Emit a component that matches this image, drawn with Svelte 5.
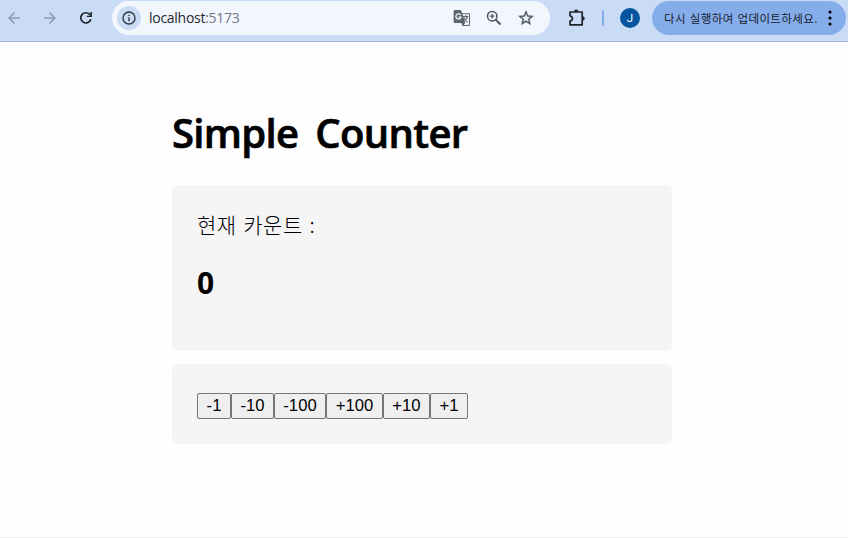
<script>
  let count = $state(0);
  const steps = [
    { value: -1, width: 34 },
    { value: -10, width: 43 },
    { value: -100, width: 52 },
    { value: 100, width: 57 },
    { value: 10, width: 47 },
    { value: 1, width: 38 }
  ];
</script>

<div class="window">
  <header class="toolbar">
    <nav class="nav">
      <svg class="muted" width="18" height="18" viewBox="0 0 24 24"><path d="M20 11H7.830l5.590-5.590L12 4l-8 8 8 8 1.410-1.410L7.830 13H20v-2z" /></svg>
      <svg class="muted" width="18" height="18" viewBox="0 0 24 24"><path d="M12 4l-1.410 1.410L16.170 11H4v2h12.170l-5.580 5.590L12 20l8-8z" /></svg>
      <svg width="18" height="18" viewBox="0 0 18 18"><path d="M13.800 10.200A5.100 5.100 0 1 1 13.100 6" fill="none" stroke="#1c2128" stroke-width="1.700" /><path d="M14.900 3v5.100H9.800V6.700h3.500V3z" fill="#1c2128" /></svg>
    </nav>
    <div class="address">
      <span class="info">
        <svg width="16" height="16" viewBox="0 0 16 16"><circle cx="8" cy="8" r="6" fill="none" stroke="#30353d" stroke-width="1.400" /><path d="M7.300 7.200h1.400v4H7.300zM7.300 4.700h1.400v1.400H7.300z" fill="#30353d" /></svg>
      </span>
      <span class="url">localhost<span class="port">:5173</span></span>
      <div class="actions">
        <svg width="18" height="18" viewBox="0 0 18 18">
          <path d="M1.800 1h6.100l1.300 3.200h6.600c.7 0 1.200.5 1.200 1.200v10.400c0 .7-.5 1.200-1.200 1.200H9.500l-1.200-3H1.800c-.7 0-1.200-.5-1.200-1.200V2.200C.6 1.500 1.100 1 1.800 1z" fill="#5d6670" />
          <path d="M9.600 5.200h5.900c.3 0 .5.2.5.5v9.800c0 .3-.2.5-.5.5h-5l1.700-2z" fill="#f2f6fd" />
          <path d="M7.700 6.100A2.600 2.600 0 1 0 8 8.100H5.400" fill="none" stroke="#f2f6fd" stroke-width="1.300" />
          <path d="M9.800 7.700h5.500M12.700 6.300v1.400M14.400 7.700c-.3 2-1.500 3.600-3 4.900M10.700 8.800c.8 1.600 2 3 3.900 4.400" fill="none" stroke="#5d6670" stroke-width="1.200" />
        </svg>
        <svg width="18" height="18" viewBox="0 0 18 18"><g fill="none" stroke="#515a65"><circle cx="7.200" cy="7.200" r="4.700" stroke-width="1.600" /><path d="M10.500 10.500l5 5" stroke-width="1.900" /><path d="M4.900 7.200h4.600M7.200 4.900v4.600" stroke-width="1.300" /></g></svg>
        <svg width="18" height="18" viewBox="0 0 24 24"><path d="M22 9.240l-7.190-.62L12 2 9.190 8.630 2 9.240l5.460 4.730L5.820 21 12 17.270 18.180 21l-1.630-7.030L22 9.240zM12 15.400l-3.760 2.270 1-4.280-3.320-2.880 4.380-.38L12 6.100l1.710 4.040 4.380.38-3.320 2.880 1 4.280L12 15.400z" fill="#515a65" stroke="#515a65" stroke-width=".5" /></svg>
      </div>
    </div>
    <svg class="puzzle" width="18" height="18" viewBox="0 0 18 18"><path d="M2 3h12.200v12.900H2v-3.700c3.200-.6 3.200-4.800 0-5.400z" fill="none" stroke="#20242b" stroke-width="1.700" stroke-linejoin="round" /><path d="M6 2.800a2.200 2.200 0 0 1 4.400 0zM14.500 7.200a2.200 2.200 0 0 1 0 4.400z" fill="#20242b" /></svg>
    <span class="divider"></span>
    <span class="avatar">J</span>
    <div class="update">
      <span class="message">다시 실행하여 업데이트하세요.</span>
      <svg width="4" height="16" viewBox="0 0 4 16"><circle cx="2" cy="2" r="1.600" /><circle cx="2" cy="8" r="1.600" /><circle cx="2" cy="14" r="1.600" /></svg>
    </div>
  </header>

  <main>
    <h1>Simple Counter</h1>
    <section class="viewer">
      <div class="label">현재 카운트 :</div>
      <h2>{count}</h2>
    </section>
    <section class="controller">
      {#each steps as step}
        <button style:width="{step.width}px" onclick={() => (count += step.value)}>{step.value > 0 ? '+' : ''}{step.value}</button>
      {/each}
    </section>
  </main>
</div>

<style>
  :global(body) { margin: 0; background: #fefefe; }
  .window {
    box-sizing: border-box;
    height: 538px;
    overflow: hidden;
    border-bottom: 1px solid #f0f0f0;
    background: #fefefe;
    color: #000;
    font-family: "Open Sans", "Noto Sans CJK KR", sans-serif;
  }
  .toolbar {
    box-sizing: border-box;
    display: flex;
    align-items: center;
    height: 42px;
    padding: 0 2px 6px 5px;
    border-bottom: 1px solid #9fb4d5;
    background: #cadbf6;
  }
  svg { display: block; flex: none; }
  .nav { display: flex; gap: 18px; width: 107px; flex: none; }
  .muted { fill: #8d9aaf; }
  .address {
    box-sizing: border-box;
    display: flex;
    align-items: center;
    width: 438px;
    height: 34px;
    margin-top: 1px;
    padding: 0 15px 0 5px;
    border-radius: 17px;
    background: #f2f6fd;
    flex: none;
  }
  .info {
    display: flex;
    align-items: center;
    justify-content: center;
    width: 24px;
    height: 24px;
    border-radius: 50%;
    background: #cadbf6;
  }
  .url { margin-left: 8px; font-size: 14px; line-height: 20px; letter-spacing: -0.28px; white-space: nowrap; color: #24282e; }
  .port { color: #737980; }
  .actions { display: flex; gap: 14px; margin-left: auto; }
  .puzzle { margin-left: 18px; }
  .divider { width: 2px; height: 16px; margin-left: 16px; border-radius: 1px; background: #85ade9; }
  .avatar {
    width: 20px;
    height: 20px;
    margin-left: 16px;
    border-radius: 50%;
    background: #05569f;
    color: #fff;
    font: 11.5px/20px Roboto, sans-serif;
    text-align: center;
  }
  .update {
    box-sizing: border-box;
    display: flex;
    align-items: center;
    justify-content: space-between;
    width: 194px;
    height: 34px;
    margin: 1px 0 0 12px;
    padding: 0 14px 0 12px;
    border-radius: 17px;
    background: #85ade9;
    color: #17202d;
  }
  .message { font: 400 11.5px/20px "Noto Sans CJK KR", sans-serif; letter-spacing: 0.4px; word-spacing: 0.8px; white-space: nowrap; }
  main { width: 500px; margin-left: 172px; padding-top: 63px; }
  h1 { margin: 0 0 24px; font-size: 40px; line-height: 56px; font-weight: 600; letter-spacing: -0.65px; word-spacing: 7px; -webkit-text-stroke: 0.7px #000; white-space: nowrap; }
  section { box-sizing: border-box; border-radius: 6px; background: #f5f5f5; }
  .viewer { height: 166px; padding: 25px; }
  .label { font-family: "Noto Sans CJK KR", sans-serif; font-size: 21px; line-height: 28px; font-weight: 300; letter-spacing: 0.5px; word-spacing: 1.5px; }
  h2 { margin: 24px 0 0; font-size: 30px; line-height: 42px; font-weight: 700; }
  .controller { display: flex; height: 80px; margin-top: 13px; padding: 29px 25px; }
  button {
    box-sizing: border-box;
    height: 26px;
    padding: 0;
    border: 1px solid #767676;
    border-radius: 2px;
    background: #efefef;
    color: #000;
    font: 16.667px/24px "Liberation Sans", Arial, sans-serif;
    white-space: nowrap;
  }
</style>
